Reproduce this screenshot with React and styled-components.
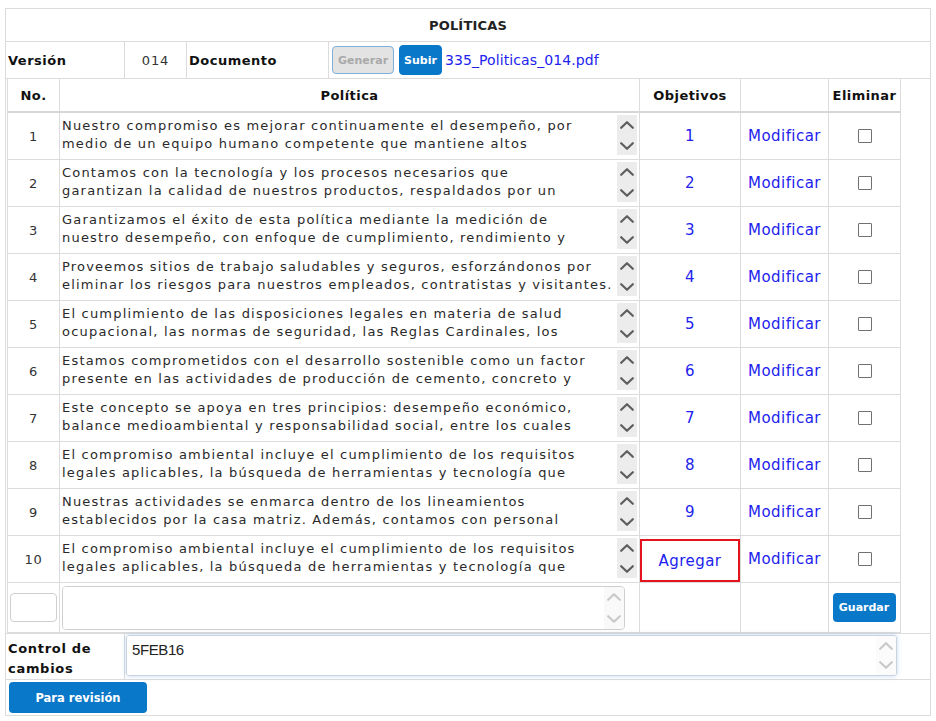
import React from "react";
import styled, { createGlobalStyle } from "styled-components";

const GlobalStyle = createGlobalStyle`
  html, body {
    margin: 0;
    background: #fff;
  }
  body {
    font-family: "DejaVu Sans", sans-serif;
    color: #222;
  }
  * {
    box-sizing: border-box;
  }
`;

const Page = styled.div`
  padding: 8px 5px 0 5px;
`;

const Panel = styled.div`
  width: 926px;
  border: 1px solid #dcdcdc;
`;

const Title = styled.div`
  height: 33px;
  border-bottom: 1px solid #dcdcdc;
  display: flex;
  align-items: center;
  justify-content: center;
  font-size: 13px;
  font-weight: bold;
  letter-spacing: 0.2px;
`;

const VersionRow = styled.div`
  display: flex;
  height: 37px;
  border-bottom: 1px solid #dcdcdc;
`;

const VCell = styled.div`
  width: ${(p) => (p.$w ? `${p.$w}px` : "auto")};
  flex: ${(p) => (p.$w ? "none" : "1")};
  border-right: ${(p) => (p.$w ? "1px solid #dcdcdc" : "none")};
  display: flex;
  align-items: center;
  justify-content: ${(p) => (p.$center ? "center" : "flex-start")};
  padding-left: ${(p) => (p.$center ? 0 : p.$pl || 2)}px;
  gap: ${(p) => p.$gap || 0}px;
  font-size: 13px;
  letter-spacing: 0.9px;
  color: #333;
`;

const Label = styled.span`
  font-size: 13px;
  font-weight: bold;
  letter-spacing: 0.5px;
  color: #111;
`;

const ActionButton = styled.button`
  height: ${(p) => (p.disabled ? 28 : 30)}px;
  padding: 0 ${(p) => (p.disabled ? 5 : 4)}px;
  border-radius: 4px;
  border: 1px solid ${(p) => (p.disabled ? "#7eaedb" : "#0a78c8")};
  background: ${(p) => (p.disabled ? "#e3e3e3" : "#0a78c8")};
  color: ${(p) => (p.disabled ? "#a9a9a9" : "#fff")};
  font-family: "DejaVu Sans", sans-serif;
  font-size: 11px;
  font-weight: bold;
  margin-right: ${(p) => (p.disabled ? 1 : 0)}px;
`;

const FileLink = styled.a`
  font-size: 14px;
  color: #2222ee;
  text-decoration: none;
  margin-left: -1px;
  letter-spacing: 0.1px;
`;

const InnerWrap = styled.div`
  padding-left: 1px;
  border-bottom: 1px solid #dcdcdc;
`;

const TableGrid = styled.div`
  display: grid;
  grid-template-columns: 52px 580px 101px 88px 72px;
  width: 894px;
  border-left: 1px solid #dcdcdc;
`;

const HeadCell = styled.div`
  height: 34px;
  border-right: 1px solid #dcdcdc;
  border-bottom: 2px solid #d6d6d6;
  display: flex;
  align-items: center;
  justify-content: center;
  font-size: 13px;
  font-weight: bold;
  letter-spacing: 0.45px;
  color: #111;
`;

const Cell = styled.div`
  height: ${(p) => p.$h || 47}px;
  border-right: 1px solid #dcdcdc;
  border-bottom: 1px solid #dcdcdc;
  display: flex;
  align-items: ${(p) => (p.$top ? "flex-start" : "center")};
  justify-content: ${(p) => (p.$start ? "flex-start" : "center")};
  font-size: 13px;
  letter-spacing: 0.7px;
  color: #333;
`;

const PolicyBox = styled.div`
  display: flex;
  width: 577px;
  height: 40px;
  margin-top: 2px;
`;

const PolicyText = styled.textarea`
  flex: 1;
  height: 40px;
  border: none;
  padding: 2px 0 0 2px;
  margin: 0;
  resize: none;
  overflow: hidden;
  font-family: "DejaVu Sans", sans-serif;
  font-size: 13px;
  line-height: 18px;
  letter-spacing: 1.2px;
  color: #2a2a2a;
  background: #fff;
  outline: none;
`;

const ScrollStrip = styled.div`
  width: 20px;
  display: flex;
  flex-direction: column;
  align-items: center;
  justify-content: space-between;
  padding: ${(p) => p.$pad || "6px 0 5px"};
  background: ${(p) => p.$bg || "#ececec"};
`;

const Chevron = ({ down, color }) => (
  <svg width="14" height="8" viewBox="0 0 14 8">
    <polyline
      points={down ? "1.2,1.2 7,6.8 12.8,1.2" : "1.2,6.8 7,1.2 12.8,6.8"}
      fill="none"
      stroke={color}
      strokeWidth="2.2"
      strokeLinecap="round"
      strokeLinejoin="round"
    />
  </svg>
);

const LinkText = styled.a`
  color: #2222ee;
  text-decoration: none;
  font-size: 15px;
  letter-spacing: 0.45px;
`;

const AddBox = styled.div`
  width: 100%;
  height: 43px;
  margin-top: 3px;
  border: 2px solid #e3141e;
  display: flex;
  align-items: center;
  justify-content: center;
`;

const Check = styled.span`
  width: 14px;
  height: 14px;
  border: 1px solid #707070;
  border-radius: 1px;
  background: #fff;
`;

const SmallInput = styled.input`
  width: 47px;
  height: 29px;
  margin-left: 2px;
  border: 1px solid #cfcfcf;
  border-radius: 4px;
`;

const NewBox = styled.div`
  display: flex;
  width: 563px;
  height: 44px;
  margin: 3px 0 0 2px;
  border: 1px solid #cfcfcf;
  border-radius: 4px;
  overflow: hidden;
`;

const NewText = styled.textarea`
  flex: 1;
  border: none;
  resize: none;
  outline: none;
  padding: 2px;
  font-family: "DejaVu Sans", sans-serif;
  font-size: 13px;
`;

const SaveButton = styled.button`
  width: 63px;
  height: 29px;
  border: none;
  border-radius: 4px;
  background: #0a78c8;
  color: #fff;
  font-family: "DejaVu Sans", sans-serif;
  font-size: 11px;
  font-weight: bold;
  margin-left: -1px;
`;

const ControlRow = styled.div`
  display: flex;
  height: 46px;
  border-bottom: 1px solid #dcdcdc;
`;

const ControlLabel = styled.div`
  width: 119px;
  border-right: 1px solid #dcdcdc;
  padding: 5px 0 0 2px;
  font-size: 13px;
  font-weight: bold;
  letter-spacing: 0.7px;
  line-height: 20px;
  color: #111;
`;

const ControlBox = styled.div`
  display: flex;
  width: 771px;
  height: 41px;
  margin: 1px 0 0 1px;
  border: 1px solid #c9d3dd;
  border-radius: 3px;
  box-shadow: 0 0 5px rgba(90, 150, 215, 0.35);
  overflow: hidden;
`;

const ControlText = styled.textarea`
  flex: 1;
  border: none;
  resize: none;
  outline: none;
  padding: 4px 5px;
  font-family: "Liberation Sans", sans-serif;
  font-size: 15px;
  letter-spacing: -0.4px;
  line-height: 20px;
  color: #222;
`;

const Footer = styled.div`
  height: 35px;
  padding: 2px 0 0 3px;
`;

const ReviewButton = styled.button`
  width: 138px;
  height: 31px;
  border: none;
  border-radius: 4px;
  background: #0a78c8;
  color: #fff;
  font-family: "DejaVu Sans", sans-serif;
  font-size: 11.5px;
  font-weight: bold;
`;

const policies = [
  [
    "Nuestro compromiso es mejorar continuamente el desempeño, por",
    "medio de un equipo humano competente que mantiene altos",
  ],
  [
    "Contamos con la tecnología y los procesos necesarios que",
    "garantizan la calidad de nuestros productos, respaldados por un",
  ],
  [
    "Garantizamos el éxito de esta política mediante la medición de",
    "nuestro desempeño, con enfoque de cumplimiento, rendimiento y",
  ],
  [
    "Proveemos sitios de trabajo saludables y seguros, esforzándonos por",
    "eliminar los riesgos para nuestros empleados, contratistas y visitantes.",
  ],
  [
    "El cumplimiento de las disposiciones legales en materia de salud",
    "ocupacional, las normas de seguridad, las Reglas Cardinales, los",
  ],
  [
    "Estamos comprometidos con el desarrollo sostenible como un factor",
    "presente en las actividades de producción de cemento, concreto y",
  ],
  [
    "Este concepto se apoya en tres principios: desempeño económico,",
    "balance medioambiental y responsabilidad social, entre los cuales",
  ],
  [
    "El compromiso ambiental incluye el cumplimiento de los requisitos",
    "legales aplicables, la búsqueda de herramientas y tecnología que",
  ],
  [
    "Nuestras actividades se enmarca dentro de los lineamientos",
    "establecidos por la casa matriz. Además, contamos con personal",
  ],
  [
    "El compromiso ambiental incluye el cumplimiento de los requisitos",
    "legales aplicables, la búsqueda de herramientas y tecnología que",
  ],
];

const App = () => {
  return (
    <>
      <GlobalStyle />
      <Page>
        <Panel>
          <Title>POLÍTICAS</Title>
          <VersionRow>
            <VCell $w={119}>
              <Label>Versión</Label>
            </VCell>
            <VCell $w={62} $center>
              014
            </VCell>
            <VCell $w={142}>
              <Label>Documento</Label>
            </VCell>
            <VCell $pl={3} $gap={4}>
              <ActionButton disabled>Generar</ActionButton>
              <ActionButton>Subir</ActionButton>
              <FileLink href="#">335_Politicas_014.pdf</FileLink>
            </VCell>
          </VersionRow>

          <InnerWrap>
            <TableGrid>
              <HeadCell>No.</HeadCell>
              <HeadCell>Política</HeadCell>
              <HeadCell>Objetivos</HeadCell>
              <HeadCell />
              <HeadCell>Eliminar</HeadCell>

              {policies.map((lines, i) => {
                const last = i === policies.length - 1;
                return (
                  <React.Fragment key={i}>
                    <Cell>{i + 1}</Cell>
                    <Cell $top $start>
                      <PolicyBox>
                        <PolicyText
                          readOnly
                          wrap="off"
                          value={lines.join("\n")}
                        />
                        <ScrollStrip>
                          <Chevron color="#5e5e5e" />
                          <Chevron down color="#5e5e5e" />
                        </ScrollStrip>
                      </PolicyBox>
                    </Cell>
                    <Cell $top={last}>
                      {last ? (
                        <AddBox>
                          <LinkText href="#">Agregar</LinkText>
                        </AddBox>
                      ) : (
                        <LinkText href="#">{i + 1}</LinkText>
                      )}
                    </Cell>
                    <Cell>
                      <LinkText href="#">Modificar</LinkText>
                    </Cell>
                    <Cell>
                      <Check />
                    </Cell>
                  </React.Fragment>
                );
              })}

              <Cell $h={50} $start>
                <SmallInput />
              </Cell>
              <Cell $h={50} $top $start>
                <NewBox>
                  <NewText />
                  <ScrollStrip $bg="#f9f9f9" $pad="6px 0 6px">
                    <Chevron color="#c9c9c9" />
                    <Chevron down color="#c9c9c9" />
                  </ScrollStrip>
                </NewBox>
              </Cell>
              <Cell $h={50} />
              <Cell $h={50} />
              <Cell $h={50}>
                <SaveButton>Guardar</SaveButton>
              </Cell>
            </TableGrid>
          </InnerWrap>

          <ControlRow>
            <ControlLabel>
              Control de
              <br />
              cambios
            </ControlLabel>
            <ControlBox>
              <ControlText defaultValue="5FEB16" />
              <ScrollStrip $bg="#fbfbfb" $pad="6px 0 6px">
                <Chevron color="#c9c9c9" />
                <Chevron down color="#c9c9c9" />
              </ScrollStrip>
            </ControlBox>
          </ControlRow>

          <Footer>
            <ReviewButton>Para revisión</ReviewButton>
          </Footer>
        </Panel>
      </Page>
    </>
  );
};

export default App;
